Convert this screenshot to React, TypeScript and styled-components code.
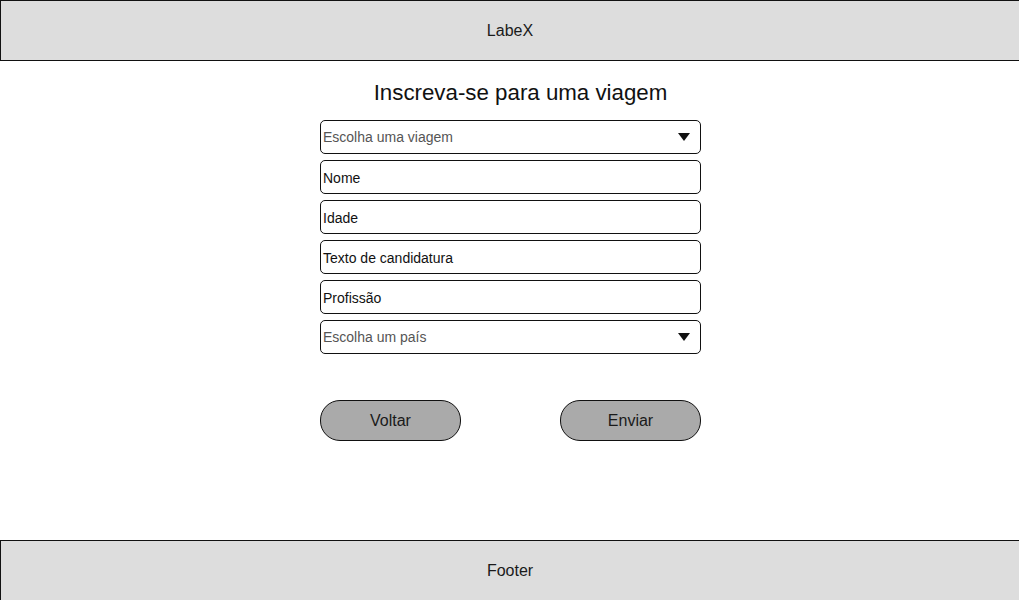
import styled, { createGlobalStyle } from "styled-components";

const GlobalStyle = createGlobalStyle`
  body {
    margin: 0;
    font-family: "Liberation Sans", Arial, sans-serif;
    color: #111;
    background: #fff;
    overflow: hidden;
  }
`;

const Page = styled.div`
  width: 1019px;
  height: 600px;
  overflow: hidden;
  display: flex;
  flex-direction: column;
`;

const Bar = styled.div`
  width: 1020px;
  height: 61px;
  flex-shrink: 0;
  box-sizing: border-box;
  border: 1px solid #111;
  background: #dddddd;
  display: flex;
  justify-content: center;
  align-items: center;
  font-size: 16px;
  color: #1a1a1a;
`;

const Main = styled.main`
  height: 479px;
  flex-shrink: 0;
  display: flex;
  flex-direction: column;
  align-items: center;
  padding: 19px 0 0 2px;
  box-sizing: border-box;
`;

const Title = styled.h1`
  margin: 0 0 14px;
  padding-left: 20px;
  font-size: 22.3px;
  line-height: 26px;
  font-weight: 400;
  color: #111;
`;

const Form = styled.form`
  width: 381px;
  display: flex;
  flex-direction: column;
  gap: 6px;
`;

const Field = styled.div<{ $muted?: boolean }>`
  height: 34px;
  box-sizing: border-box;
  border: 1px solid #111;
  border-radius: 5px;
  padding: ${(p) => (p.$muted ? "0 10px 0 2px" : "2px 10px 0 2px")};
  display: flex;
  align-items: center;
  justify-content: space-between;
  font-size: 14px;
  color: ${(p) => (p.$muted ? "#555" : "#111")};
  background: #fff;
`;

const Arrow = styled.span`
  width: 0;
  height: 0;
  border-left: 6px solid transparent;
  border-right: 6px solid transparent;
  border-top: 8px solid #111;
`;

const Buttons = styled.div`
  width: 381px;
  margin-top: 46px;
  display: flex;
  justify-content: space-between;
`;

const Button = styled.button`
  width: 141px;
  height: 41px;
  box-sizing: border-box;
  border: 1px solid #111;
  border-radius: 20px;
  background: #aaaaaa;
  font-family: "Liberation Sans", Arial, sans-serif;
  font-size: 16px;
  color: #1a1a1a;
  padding: 0;
`;

function Select({ label }: { label: string }) {
  return (
    <Field $muted>
      <span>{label}</span>
      <Arrow />
    </Field>
  );
}

export default function App() {
  return (
    <Page>
      <GlobalStyle />
      <Bar>LabeX</Bar>
      <Main>
        <Title>Inscreva-se para uma viagem</Title>
        <Form>
          <Select label="Escolha uma viagem" />
          <Field>Nome</Field>
          <Field>Idade</Field>
          <Field>Texto de candidatura</Field>
          <Field>Profissão</Field>
          <Select label="Escolha um país" />
        </Form>
        <Buttons>
          <Button type="button">Voltar</Button>
          <Button type="button">Enviar</Button>
        </Buttons>
      </Main>
      <Bar>Footer</Bar>
    </Page>
  );
}
